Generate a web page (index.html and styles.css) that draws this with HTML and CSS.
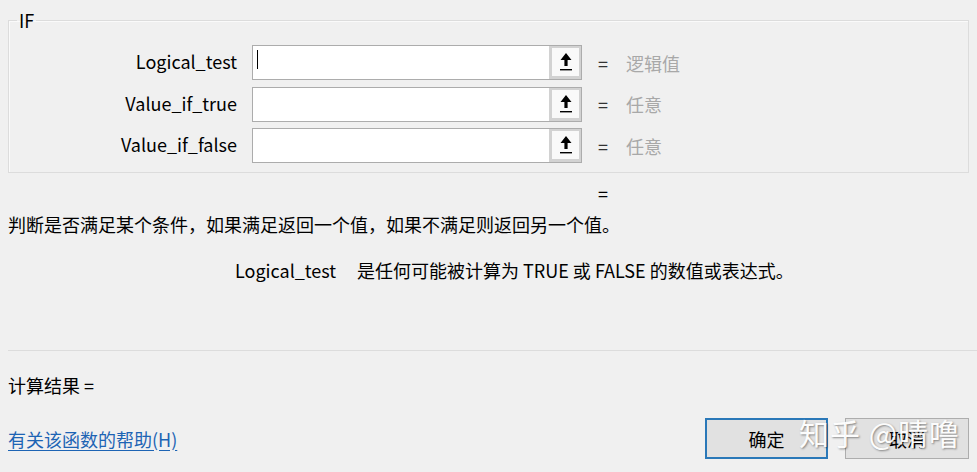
FILE: index.html
```html
<!DOCTYPE html>
<html lang="zh-CN">
<head>
<meta charset="utf-8">
<title>函数参数 - IF</title>
<link rel="stylesheet" href="styles.css">
</head>
<body>
<div class="dialog">
  <fieldset class="group">
    <legend class="group-title">IF</legend>
    <div class="arg-row">
      <label class="arg-label">Logical_test</label>
      <div class="arg-input">
        <div class="arg-field"><span class="caret"></span></div>
        <div class="arg-btn">
          <svg width="14" height="20" viewBox="0 0 14 20"><path d="M7 1 L12.5 8 L8.6 8 L8.6 14 L5.4 14 L5.4 8 L1.5 8 Z" fill="#000"/><rect x="1" y="17" width="12" height="1.4" fill="#000"/></svg>
        </div>
      </div>
      <span class="arg-eq">=</span>
      <span class="arg-value">逻辑值</span>
    </div>
    <div class="arg-row">
      <label class="arg-label">Value_if_true</label>
      <div class="arg-input">
        <div class="arg-field"></div>
        <div class="arg-btn">
          <svg width="14" height="20" viewBox="0 0 14 20"><path d="M7 1 L12.5 8 L8.6 8 L8.6 14 L5.4 14 L5.4 8 L1.5 8 Z" fill="#000"/><rect x="1" y="17" width="12" height="1.4" fill="#000"/></svg>
        </div>
      </div>
      <span class="arg-eq">=</span>
      <span class="arg-value">任意</span>
    </div>
    <div class="arg-row">
      <label class="arg-label">Value_if_false</label>
      <div class="arg-input">
        <div class="arg-field"></div>
        <div class="arg-btn">
          <svg width="14" height="20" viewBox="0 0 14 20"><path d="M7 1 L12.5 8 L8.6 8 L8.6 14 L5.4 14 L5.4 8 L1.5 8 Z" fill="#000"/><rect x="1" y="17" width="12" height="1.4" fill="#000"/></svg>
        </div>
      </div>
      <span class="arg-eq">=</span>
      <span class="arg-value">任意</span>
    </div>
  </fieldset>

  <div class="result-eq">=</div>
  <p class="desc">判断是否满足某个条件，如果满足返回一个值，如果不满足则返回另一个值。</p>
  <p class="arg-desc"><span class="arg-desc-name">Logical_test</span><span>是任何可能被计算为 TRUE 或 FALSE 的数值或表达式。</span></p>

  <hr class="sep">

  <div class="calc">计算结果 =</div>

  <div class="footer">
    <a class="help-link" href="#">有关该函数的帮助(H)</a>
    <div class="buttons">
      <button class="btn btn-primary">确定</button>
      <button class="btn">取消</button>
    </div>
  </div>

  <div class="watermark">知乎 @晴噜</div>
</div>
</body>
</html>
```

FILE: styles.css
```css
html, body {
  margin: 0;
  padding: 0;
  background: #f0f0f0;
}

body {
  font-family: "Noto Sans CJK SC", "Noto Sans", sans-serif;
  font-size: 18px;
  line-height: 20px;
  color: #000;
  width: 977px;
  height: 472px;
  overflow: hidden;
}

.dialog {
  position: relative;
  display: flex;
  flex-direction: column;
  height: 472px;
}

.group {
  margin: 10px 8px 0 8px;
  padding: 15px 0 9px 0;
  border: 1px solid #dcdcdc;
  box-shadow: inset 1px 1px 0 #fafafa;
  display: flex;
  flex-direction: column;
  gap: 6.5px;
  min-width: 0;
}

.group-title {
  margin-left: 8px;
  padding: 0 2px;
  line-height: 20px;
}

.arg-row {
  display: flex;
  align-items: center;
  height: 35px;
}

.arg-label {
  width: 228px;
  text-align: right;
  flex: none;
  margin-top: -3px;
}

.arg-input {
  margin-left: 15px;
  width: 330px;
  height: 35px;
  box-sizing: border-box;
  border: 1px solid #acacac;
  display: flex;
  background: #fff;
}

.arg-field {
  flex: 1;
  display: flex;
  align-items: center;
  padding-left: 4px;
}

.caret {
  display: block;
  width: 1px;
  height: 19px;
  background: #000;
  margin-top: -6px;
}

.arg-btn {
  width: 32px;
  flex: none;
  box-sizing: border-box;
  border: 3px solid #d2d2d2;
  border-right-width: 2px;
  border-top-width: 2px;
  background: #f9f9f9;
  display: flex;
  align-items: center;
  justify-content: center;
}

.arg-eq {
  margin-left: 16px;
  width: 10px;
  color: #333;
}

.arg-value {
  margin-left: 18px;
  color: #a8a8a8;
}

.result-eq {
  margin-top: 10px;
  padding-left: 598px;
}

.desc {
  margin: 11px 0 0 8px;
}

.arg-desc {
  margin: 26px 0 0 235px;
  display: flex;
}

.arg-desc-name {
  width: 122px;
}

.sep {
  margin: 70px 0 0 8px;
  border: none;
  border-top: 1px solid #dcdcdc;
  height: 0;
}

.calc {
  margin: 24px 0 0 8px;
}

.footer {
  margin-top: 23px;
  display: flex;
  align-items: center;
  justify-content: space-between;
  padding: 0 8px;
}

.help-link {
  color: #1d64b4;
  text-decoration: underline;
  text-underline-offset: 3px;
}

.buttons {
  display: flex;
  gap: 17px;
}

.btn {
  font-family: inherit;
  font-size: 18px;
  width: 124px;
  height: 41px;
  box-sizing: border-box;
  background: #e1e1e1;
  border: 1px solid #adadad;
  color: #000;
  padding: 0;
}

.btn-primary {
  border: 2px solid #2a78b8;
  width: 123px;
}

.watermark {
  position: absolute;
  left: 799px;
  top: 414px;
  font-size: 30px;
  line-height: 36px;
  color: #fff;
  letter-spacing: 1px;
  text-shadow: 1px 1px 2px rgba(0, 0, 0, 0.45);
  opacity: 0.92;
}
```
